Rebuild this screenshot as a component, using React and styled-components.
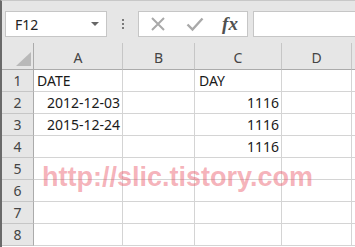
import React from 'react'
import styled, { createGlobalStyle } from 'styled-components'

const GlobalStyle = createGlobalStyle`
    html, body {
        margin: 0;
        padding: 0;
        background: #ffffff;
    }
    body {
        font-family: "Noto Sans", "Open Sans", sans-serif;
    }
`

const columns = ['A', 'B', 'C', 'D']

const rows = [
    { a: 'DATE', c: 'DAY', aRight: false, cRight: false },
    { a: '2012-12-03', c: '1116', aRight: true, cRight: true },
    { a: '2015-12-24', c: '1116', aRight: true, cRight: true },
    { a: '', c: '1116', aRight: true, cRight: true },
    { a: '', c: '' },
    { a: '', c: '' },
    { a: '', c: '' },
    { a: '', c: '' },
]

function App() {
    return (
        <>
            <GlobalStyle />
            <Window>
                <FormulaBar>
                    <NameBox>
                        <NameText>F12</NameText>
                        <Caret />
                    </NameBox>
                    <Grip>
                        <Dot />
                        <Dot />
                        <Dot />
                    </Grip>
                    <ButtonBox>
                        <IconSlot>
                            <svg width="16" height="16" viewBox="0 0 16 16">
                                <path d="M2 2 L14 14 M14 2 L2 14" stroke="#a9a9a9" strokeWidth="2" fill="none" />
                            </svg>
                        </IconSlot>
                        <IconSlot>
                            <svg width="18" height="16" viewBox="0 0 18 16">
                                <path d="M1.5 8.5 L6.5 13.5 L16.5 2.5" stroke="#a9a9a9" strokeWidth="2.4" fill="none" />
                            </svg>
                        </IconSlot>
                        <Fx>fx</Fx>
                    </ButtonBox>
                    <FormulaInput />
                </FormulaBar>

                <Sheet>
                    <Corner>
                        <svg width="15" height="14" viewBox="0 0 15 14">
                            <path d="M15 0 L15 14 L0 14 Z" fill="#b9b9b9" />
                        </svg>
                    </Corner>
                    {columns.map((c) => (
                        <ColHead key={c}>{c}</ColHead>
                    ))}
                    <Filler $head />
                    {rows.map((r, i) => (
                        <React.Fragment key={i}>
                            <RowHead>{i + 1}</RowHead>
                            <Cell $right={r.aRight} $indent={r.aRight ? 0 : 3}>{r.a}</Cell>
                            <Cell />
                            <Cell $right={r.cRight} $indent={r.cRight ? 0 : 4}>{r.c}</Cell>
                            <Cell />
                            <Filler />
                        </React.Fragment>
                    ))}
                    <Watermark>http://slic.tistory.com</Watermark>
                </Sheet>
            </Window>
        </>
    )
}

export default App

const Window = styled.div`
    width: 355px;
    height: 247px;
    overflow: hidden;
    background: #e6e6e6;
    border-left: 2px solid #6a6a6a;
    border-top: 1px solid #c8c8c8;
    box-sizing: border-box;
    display: flex;
    flex-direction: column;
`

const FormulaBar = styled.div`
    display: flex;
    align-items: stretch;
    height: 26px;
    margin-top: 10px;
    padding-left: 3px;
`

const NameBox = styled.div`
    width: 102px;
    box-sizing: border-box;
    background: #ffffff;
    border: 1px solid #c6c6c6;
    display: flex;
    align-items: center;
    justify-content: space-between;
    padding: 0 7px 0 9px;
`

const NameText = styled.span`
    font-size: 14px;
    color: #222;
`

const Caret = styled.span`
    width: 0;
    height: 0;
    border-left: 4px solid transparent;
    border-right: 4px solid transparent;
    border-top: 4px solid #666;
`

const Grip = styled.div`
    width: 31px;
    display: flex;
    flex-direction: column;
    align-items: center;
    justify-content: center;
    gap: 2px;
`

const Dot = styled.span`
    width: 2px;
    height: 2px;
    background: #7a7a7a;
`

const ButtonBox = styled.div`
    width: 110px;
    box-sizing: border-box;
    background: #ffffff;
    border: 1px solid #c6c6c6;
    display: grid;
    grid-template-columns: 38px 36px 1fr;
    align-items: center;
`

const IconSlot = styled.span`
    display: flex;
    align-items: center;
    justify-content: center;
`

const Fx = styled.span`
    font-family: "Liberation Serif", "DejaVu Serif", serif;
    font-style: italic;
    font-weight: bold;
    font-size: 19px;
    color: #505050;
    text-align: center;
    line-height: 1;
    padding-bottom: 2px;
`

const FormulaInput = styled.div`
    flex: 1;
    margin-left: 5px;
    background: #ffffff;
    border: 1px solid #c6c6c6;
    border-right: none;
`

const Sheet = styled.div`
    position: relative;
    margin-top: 6px;
    flex: 1;
    display: grid;
    grid-template-columns: 32px 89px 72px 87px 70px 1fr;
    grid-template-rows: 27px;
    grid-auto-rows: 22px;
    background: #ffffff;
    font-size: 14px;
    color: #1a1a1a;
`

const Corner = styled.div`
    background: #e6e6e6;
    border-right: 1px solid #ababab;
    border-bottom: 1px solid #ababab;
    display: flex;
    align-items: flex-end;
    justify-content: flex-end;
    padding: 0 2px 3px 0;
`

const ColHead = styled.div`
    background: #e6e6e6;
    border-right: 1px solid #c6c6c6;
    border-bottom: 1px solid #ababab;
    display: flex;
    align-items: center;
    justify-content: center;
    padding-top: 3px;
    color: #444;
    font-size: 14px;
`

const RowHead = styled.div`
    background: #e6e6e6;
    border-right: 1px solid #ababab;
    border-bottom: 1px solid #c6c6c6;
    display: flex;
    align-items: center;
    justify-content: center;
    color: #444;
    font-size: 14px;
`

const Cell = styled.div`
    border-right: 1px solid #d4d4d4;
    border-bottom: 1px solid #d4d4d4;
    display: flex;
    align-items: center;
    justify-content: ${(p) => (p.$right ? 'flex-end' : 'flex-start')};
    padding-left: ${(p) => p.$indent || 0}px;
    padding-right: ${(p) => (p.$right ? 2 : 0)}px;
    white-space: nowrap;
`

const Filler = styled.div`
    background: ${(p) => (p.$head ? '#e6e6e6' : '#ffffff')};
    border-bottom: 1px solid ${(p) => (p.$head ? '#ababab' : '#d4d4d4')};
`

const Watermark = styled.div`
    position: absolute;
    left: 40px;
    top: 119px;
    font-family: "Liberation Sans", Arial, sans-serif;
    font-weight: bold;
    font-size: 27px;
    color: rgba(234, 84, 100, 0.45);
    white-space: nowrap;
    pointer-events: none;
`
